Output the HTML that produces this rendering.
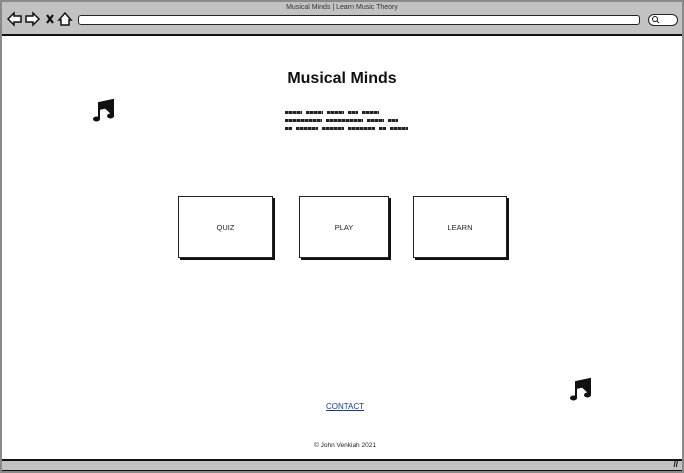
<!DOCTYPE html>
<html><head><meta charset="utf-8"><style>
*{margin:0;padding:0;box-sizing:border-box}
body{width:684px;height:473px;overflow:hidden;background:#fff;font-family:"Liberation Sans",sans-serif;position:relative}
.frame{position:absolute;left:0;top:0;width:684px;height:473px;border:2px solid #8a8a8a}
.top{position:absolute;left:2px;top:2px;width:680px;height:34px;background:#c2c2c2;border-bottom:2px solid #111}
.title{position:absolute;top:4px;left:0;width:684px;text-align:center;font-size:7px;color:#333}
.url{position:absolute;left:78px;top:15px;width:562px;height:10px;background:#fff;border:1.5px solid #222;border-radius:3px}
.search{position:absolute;left:648px;top:14px;width:30px;height:12px;background:#fff;border:1.5px solid #222;border-radius:7px}
.bot{position:absolute;left:2px;top:459px;width:680px;height:12px;background:#c2c2c2;border-top:2px solid #111;border-bottom:1px solid #111}
h1{position:absolute;top:70px;left:0;width:684px;text-align:center;font-size:16px;font-weight:bold;color:#111}
.ln{position:absolute;left:285px;height:3px;display:flex;gap:4px}
.ln i{display:block;height:3px;background:repeating-linear-gradient(90deg,#222 0 3px,#777 3px 4px)}
.btn{position:absolute;top:196px;height:62px;border:1px solid #222;box-shadow:2px 2px 0 #111;background:#fff;font-size:7.5px;display:flex;align-items:center;justify-content:center;color:#222}
.contact{position:absolute;top:402px;left:0;width:690px;text-align:center;font-size:8px;color:#1a3c8c;text-decoration:underline}
.foot{position:absolute;top:442px;left:0;width:690px;text-align:center;font-size:6.5px;color:#222}
</style></head><body>
<div class="top"></div>
<div class="frame"></div>
<div class="title">Musical Minds | Learn Music Theory</div>
<svg style="position:absolute;left:7px;top:11px" width="68" height="16" viewBox="0 0 68 16">
<path d="M1 8 L7 2 L7 5 L14 5 L14 11 L7 11 L7 14 Z" fill="#fff" stroke="#111" stroke-width="1.5"/>
<path d="M32 8 L26 2 L26 5 L19 5 L19 11 L26 11 L26 14 Z" fill="#fff" stroke="#111" stroke-width="1.5"/>
<path d="M40 4 L46 12 M46 4 L40 12" stroke="#111" stroke-width="2.2"/>
<path d="M58 2 L64 9 L62 9 L62 14 L54 14 L54 9 L52 9 Z" fill="#fff" stroke="#111" stroke-width="1.5"/>
</svg>
<div class="url"></div>
<div class="search"><svg width="10" height="10" style="position:absolute;left:2px;top:0"><circle cx="4" cy="4" r="2.5" fill="none" stroke="#111"/><path d="M6 6 L8 8" stroke="#111"/></svg></div>
<h1>Musical Minds</h1>
<div class="ln" style="top:111px"><i style="width:17px"></i><i style="width:17px"></i><i style="width:17px"></i><i style="width:10px"></i><i style="width:17px"></i></div>
<div class="ln" style="top:119px"><i style="width:37px"></i><i style="width:37px"></i><i style="width:17px"></i><i style="width:10px"></i></div>
<div class="ln" style="top:127px"><i style="width:7px"></i><i style="width:22px"></i><i style="width:22px"></i><i style="width:27px"></i><i style="width:7px"></i><i style="width:18px"></i></div>
<svg style="position:absolute;left:92px;top:99px" width="24" height="24" viewBox="0 0 24 24">
<path d="M7 4 L21 1 L21 17 M7 4 L7 20 M7 4 L21 1 L21 7 L7 10 Z" fill="#111" stroke="#111" stroke-width="2"/>
<ellipse cx="4.5" cy="20" rx="3.5" ry="2.5" fill="#111"/><ellipse cx="18.5" cy="17" rx="3.5" ry="2.5" fill="#111"/>
</svg>
<svg style="position:absolute;left:569px;top:378px" width="24" height="24" viewBox="0 0 24 24">
<path d="M7 4 L21 1 L21 17 M7 4 L7 20 M7 4 L21 1 L21 7 L7 10 Z" fill="#111" stroke="#111" stroke-width="2"/>
<ellipse cx="4.5" cy="20" rx="3.5" ry="2.5" fill="#111"/><ellipse cx="18.5" cy="17" rx="3.5" ry="2.5" fill="#111"/>
</svg>
<div class="btn" style="left:178px;width:95px">QUIZ</div>
<div class="btn" style="left:299px;width:90px">PLAY</div>
<div class="btn" style="left:413px;width:94px">LEARN</div>
<div class="contact">CONTACT</div>
<div class="foot">© John Venkiah 2021</div>
<div class="bot"><span style="position:absolute;right:4px;top:-1px;font-size:8px;font-weight:bold">//</span></div>
</body></html>
